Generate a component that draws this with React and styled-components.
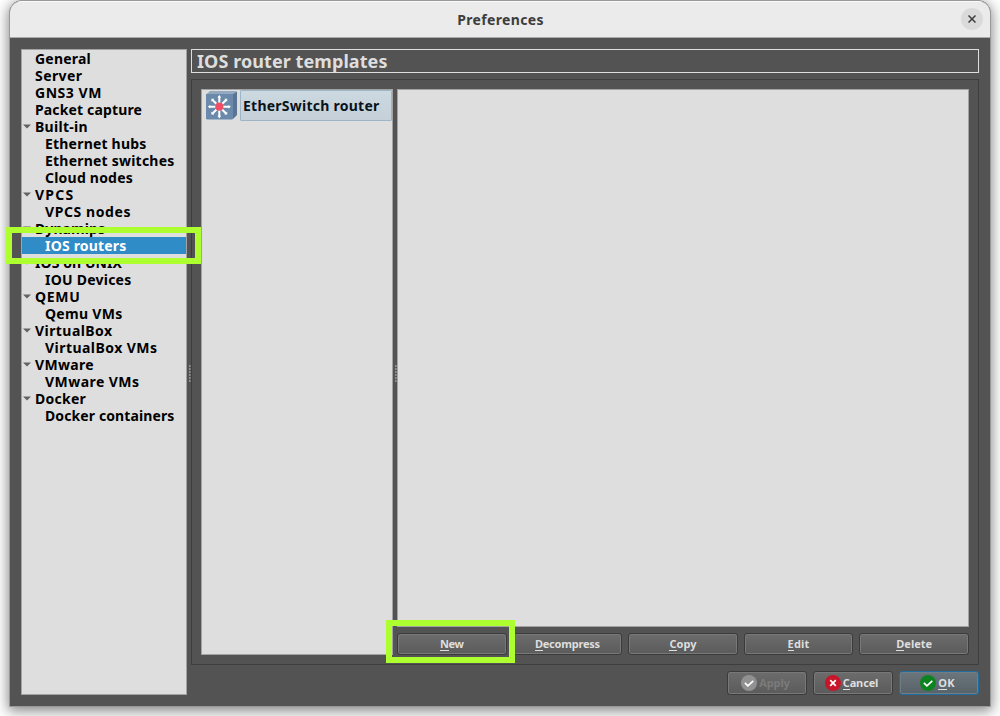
import React, { useLayoutEffect, useRef, useState } from "react";
import styled, { createGlobalStyle, css } from "styled-components";

const GlobalStyle = createGlobalStyle`
  * { box-sizing: border-box; }
  body {
    margin: 0;
    background: #fff;
    overflow: hidden;
    font-family: "Noto Sans", "Open Sans", sans-serif;
    font-weight: 700;
  }
`;

const Desktop = styled.div`
  position: relative;
  width: 1000px;
  height: 716px;
  padding: 0 9px 9px;
  overflow: hidden;
`;

const Window = styled.div`
  display: flex;
  flex-direction: column;
  height: 707px;
  border: 1px solid #999;
  border-radius: 13px 13px 0 0;
  background: #535353;
  box-shadow: 0 3px 13px 1px rgba(0, 0, 0, 0.48);
  overflow: hidden;
`;

const TitleBar = styled.header`
  display: grid;
  grid-template-columns: 1fr auto 1fr;
  align-items: center;
  flex: none;
  height: 37px;
  padding: 0 7px 0 8px;
  background: #ebebeb;
  border-top: 1px solid #fafafa;
  border-bottom: 1px solid #aaa;
  color: #3d3d3d;
  font-size: 14px;
`;

const CloseButton = styled.button`
  grid-column: 3;
  justify-self: end;
  display: grid;
  place-items: center;
  width: 22px;
  height: 22px;
  margin-top: -1px;
  padding: 0;
  border: 0;
  border-radius: 50%;
  background: #dadada;
`;

const Body = styled.div`
  display: flex;
  flex: 1;
  min-height: 0;
  padding: 11px;
`;

const panel = css`
  background: #dedede;
  border: 1px solid #a3a3a3;
`;

const Sidebar = styled.nav`
  ${panel}
  flex: none;
  width: 166px;
`;

const Splitter = styled.div`
  display: flex;
  flex-direction: column;
  justify-content: flex-start;
  align-items: flex-end;
  gap: 1px;
  flex: none;
  width: 4px;
  padding-top: ${(p) => p.$top}px;
`;

const Grip = styled.i`
  flex: none;
  width: 2px;
  height: 2px;
  background: #929292;
  border-right: 1px solid #777;
`;

const TreeRow = styled.div`
  display: flex;
  align-items: center;
  height: 17px;
  padding-left: ${(p) => (p.$child ? 23 : 1)}px;
  font-size: 14px;
  line-height: 17px;
  color: ${(p) => (p.$selected ? "#fff" : "#000")};
  background: ${(p) => (p.$selected ? "#308cc6" : "transparent")};
`;

const ArrowSlot = styled.span`
  display: grid;
  place-items: center;
  flex: none;
  width: 8px;
  height: 17px;
  margin-right: 4px;
`;

const Main = styled.main`
  display: flex;
  flex-direction: column;
  width: 788px;
`;

const Heading = styled.h1`
  display: flex;
  align-items: center;
  flex: none;
  height: 24px;
  margin: 0 0 6px;
  padding-left: 5px;
  border: 1px solid #dedede;
  color: #dedede;
  font-size: 18px;
  line-height: 22px;
`;

const Frame = styled.section`
  display: flex;
  flex: none;
  height: 586px;
  padding: 9px;
  border: 1px solid #3e3e3e;
`;

const TemplateList = styled.div`
  ${panel}
  flex: none;
  width: 192px;
  height: 566px;
`;

const TemplateItem = styled.div`
  display: flex;
  align-items: center;
  height: 31px;
  padding-left: 4px;
  color: #08131c;
  font-size: 14px;
`;

const TemplateName = styled.div`
  display: flex;
  align-items: center;
  flex: 1;
  height: 31px;
  margin-left: 3px;
  padding-left: 2px;
  border: 1px solid #9db5c6;
  border-radius: 1px;
  background: linear-gradient(#ccd9e1, #c5d0d8);
`;

const Details = styled.div`
  display: flex;
  flex-direction: column;
  gap: 6px;
  width: 572px;
`;

const DetailsPane = styled.div`
  ${panel}
  height: 538px;
`;

const Actions = styled.div`
  display: grid;
  grid-template-columns: repeat(5, 1fr);
  gap: 6px;
`;

const Button = styled.button`
  display: flex;
  align-items: center;
  justify-content: center;
  gap: 2px;
  height: ${(p) => (p.$dialog ? 24 : 22)}px;
  padding: 0 ${(p) => (p.$dialog ? 3 : 0)}px 0 0;
  border: 1px solid ${(p) => (p.$primary ? "#1f6da0" : "#3b3b3b")};
  border-radius: 3px;
  background: ${(p) =>
    p.$primary ? "linear-gradient(#6b757b, #586269)" : "linear-gradient(#6c6c6c, #5b5b5b)"};
  box-shadow: inset 0 0 0 1px ${(p) => (p.$primary ? "#6f7d86" : "#787878")};
  color: ${(p) => (p.disabled ? "#7b7b7b" : "#dedede")};
  font: 700 11px/16px "Noto Sans", sans-serif;
`;

const Mnemonic = styled.span`
  display: inline-block;
  height: 15px;
  line-height: 15px;
  border-bottom: 1px solid #dedede;
`;

const Footer = styled.footer`
  display: grid;
  grid-template-columns: repeat(3, 80px);
  justify-content: end;
  gap: 6px;
  margin-top: 6px;
`;

const Highlight = styled.div`
  position: absolute;
  left: ${(p) => p.$x}px;
  top: ${(p) => p.$y}px;
  width: ${(p) => p.$w}px;
  height: ${(p) => p.$h}px;
  border: 6px solid #adff2f;
  pointer-events: none;
`;

const TextRun = styled.span`
  white-space: nowrap;
`;

/* Tracks its text so that it takes up the given width. */
function Label({ width, children }) {
  const ref = useRef(null);
  const [spacing, setSpacing] = useState(0);
  useLayoutEffect(() => {
    const el = ref.current;
    el.style.letterSpacing = "0px";
    const natural = el.getBoundingClientRect().width;
    const value = (width - natural) / el.textContent.length;
    el.style.letterSpacing = `${value}px`;
    setSpacing(value);
  }, [width]);
  return (
    <TextRun ref={ref} style={{ letterSpacing: `${spacing}px` }}>
      {children}
    </TextRun>
  );
}

function Arrow() {
  return (
    <svg width="8" height="5" viewBox="0 0 8 5">
      <path d="M0 0.5h8L4 4.5z" fill="#626262" />
    </svg>
  );
}

const RouterSvg = styled.svg`
  flex: none;
  margin-bottom: 1px;
`;

function RouterIcon() {
  return (
    <RouterSvg width="31" height="30" viewBox="0 0 31 30">
      <path d="M0 4.500L4 1h25.500l1.500 1-4 2.500z" fill="#94a9c0" />
      <path d="M26.500 4.500L31 1.500V25l-4.500 4.500z" fill="#587594" />
      <path d="M0 4h27v24.500l-1 1H1l-1-1z" fill="#6b8aab" />
      <g stroke="#fff" strokeWidth="2" fill="none">
        <path d="M13.300 6.500v20.500M3 16.700h20.600M6.300 9.700l14 14M20.300 9.700l-14 14" />
      </g>
      <g fill="#fff">
        <path d="M13.300 5l1.800 2.600h-3.600zM13.300 28.400l1.800-2.600h-3.600zM1.800 16.700l2.400-1.800v3.600zM24.800 16.700l-2.400-1.800v3.600z" />
        <path d="M5.400 8.800h2.900l-2.900 2.900zM21.200 8.800h-2.900l2.900 2.900zM5.400 24.600h2.900l-2.900-2.900zM21.200 24.600h-2.900l2.900-2.900z" />
      </g>
      <circle cx="13.300" cy="16.700" r="4.100" fill="#ee5068" />
    </RouterSvg>
  );
}

function StatusIcon({ color, cross }) {
  return (
    <svg width="16" height="16" viewBox="0 0 16 16">
      <circle cx="8" cy="8" r="8" fill={color} />
      <path
        d={cross ? "M5.200 5.200l5.600 5.600M10.800 5.200l-5.600 5.600" : "M3.900 7.800l3 3 5.400-5"}
        fill="none"
        stroke="#fff"
        strokeWidth="1.700"
      />
    </svg>
  );
}

const tree = [
  ["General", 56],
  ["Server", 47.5],
  ["GNS3 VM", 67],
  ["Packet capture", 107],
  ["Built-in", 53, "open"],
  ["Ethernet hubs", 101.5, "child"],
  ["Ethernet switches", 129.5, "child"],
  ["Cloud nodes", 88, "child"],
  ["VPCS", 39.5, "open"],
  ["VPCS nodes", 86, "child"],
  ["Dynamips", 70, "open"],
  ["IOS routers", 81.5, "child"],
  ["IOS on UNIX", 87, "open"],
  ["IOU Devices", 86.5, "child"],
  ["QEMU", 45.5, "open"],
  ["Qemu VMs", 77.5, "child"],
  ["VirtualBox", 77.5, "open"],
  ["VirtualBox VMs", 112.5, "child"],
  ["VMware", 59, "open"],
  ["VMware VMs", 94.5, "child"],
  ["Docker", 51, "open"],
  ["Docker containers", 129.5, "child"],
];

const actions = [
  ["New", 23.5],
  ["Decompress", 65],
  ["Copy", 27],
  ["Edit", 22],
  ["Delete", 36],
];

function ButtonText({ text, width, plain }) {
  return (
    <Label width={width}>
      {plain ? text[0] : <Mnemonic>{text[0]}</Mnemonic>}
      {text.slice(1)}
    </Label>
  );
}

function Grips({ top }) {
  return (
    <Splitter $top={top}>
      {[0, 1, 2, 3, 4, 5].map((i) => (
        <Grip key={i} />
      ))}
    </Splitter>
  );
}

export default function App() {
  return (
    <Desktop>
      <GlobalStyle />
      <Window>
        <TitleBar>
          <span />
          <Label width={86.5}>Preferences</Label>
          <CloseButton aria-label="Close">
            <svg width="8" height="8" viewBox="0 0 8 8">
              <path d="M0.500 0.500l7 7M7.500 0.500l-7 7" stroke="#3d3d3d" strokeWidth="1.500" />
            </svg>
          </CloseButton>
        </TitleBar>
        <Body>
          <Sidebar>
            {tree.map(([name, width, kind]) => (
              <TreeRow key={name} $child={kind === "child"} $selected={name === "IOS routers"}>
                {kind !== "child" && <ArrowSlot>{kind === "open" && <Arrow />}</ArrowSlot>}
                <Label width={width}>{name}</Label>
              </TreeRow>
            ))}
          </Sidebar>
          <Grips top={316} />
          <Main>
            <Heading>
              <Label width={190.5}>IOS router templates</Label>
            </Heading>
            <Frame>
              <TemplateList>
                <TemplateItem>
                  <RouterIcon />
                  <TemplateName>
                    <Label width={136.5}>EtherSwitch router</Label>
                  </TemplateName>
                </TemplateItem>
              </TemplateList>
              <Grips top={276} />
              <Details>
                <DetailsPane />
                <Actions>
                  {actions.map(([name, width]) => (
                    <Button key={name}>
                      <ButtonText text={name} width={width} />
                    </Button>
                  ))}
                </Actions>
              </Details>
            </Frame>
            <Footer>
              <Button $dialog disabled>
                <StatusIcon color="#919191" />
                <ButtonText text="Apply" width={30.5} plain />
              </Button>
              <Button $dialog>
                <StatusIcon color="#c7162b" cross />
                <ButtonText text="Cancel" width={35.5} />
              </Button>
              <Button $dialog $primary>
                <StatusIcon color="#0e8420" />
                <ButtonText text="OK" width={16.5} />
              </Button>
            </Footer>
          </Main>
        </Body>
      </Window>
      <Highlight $x={6} $y={227} $w={195} $h={37} />
      <Highlight $x={386} $y={620} $w={129} $h={43} />
    </Desktop>
  );
}
